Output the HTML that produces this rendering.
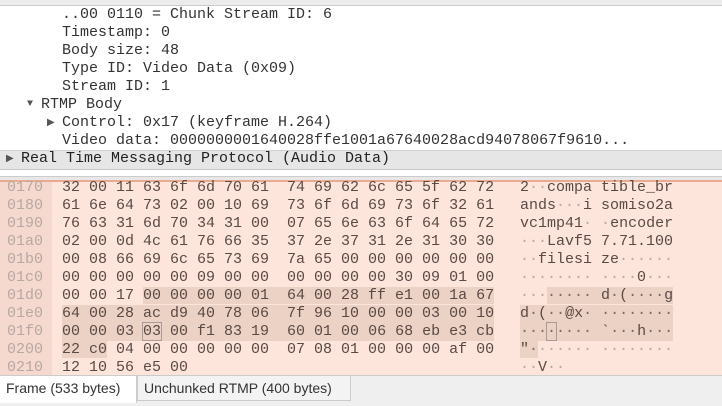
<!DOCTYPE html>
<html><head><meta charset="utf-8"><style>
body{margin:0;width:722px;height:405px;overflow:hidden;background:#fff;position:relative;font-family:"Liberation Mono",monospace;}
.r{position:absolute;left:0;height:18px;line-height:18px;font-size:15px;color:#333;white-space:pre;}
.tri{position:absolute;font-size:10px;color:#555;}
#hex{position:absolute;left:0;top:180px;width:722px;height:193px;background:#fde5dc;border-top:2px solid #e8aa90;border-bottom:2px solid #e0a890;}
#offcol{position:absolute;left:0;top:0;width:52px;height:100%;background:#f5d9cf;}
.h{position:absolute;height:18px;line-height:18px;font-size:15px;white-space:pre;color:#5a4a44;}
.o{color:#b8a8a2;left:7px;}
.x{left:62px;}
.a{left:520px;}
.hl{background:#ecd1c5;}
.d{color:#b5a8a4;}
.hl .d,.d.in{color:#7a6a64;}
.box{outline:1px solid #a99;}
#tabs{position:absolute;left:0;top:375px;width:722px;height:30px;background:#efefef;border-top:1px solid #ccc;font-family:"Liberation Sans",sans-serif;font-size:14px;color:#333;}
.tab{position:absolute;top:0;height:26px;line-height:24px;padding:0 6px;}
</style></head><body>
<div style="position:absolute;left:0;top:0;width:722px;height:5px;background:#ececec;border-bottom:1px solid #ccc"></div>
<div class="r" style="top:6px;left:62px">..00 0110 = Chunk Stream ID: 6</div>
<div class="r" style="top:24px;left:62px">Timestamp: 0</div>
<div class="r" style="top:42px;left:62px">Body size: 48</div>
<div class="r" style="top:60px;left:62px">Type ID: Video Data (0x09)</div>
<div class="r" style="top:78px;left:62px">Stream ID: 1</div>
<div class="tri" style="top:99px;left:27px">▼</div>
<div class="r" style="top:96px;left:41px">RTMP Body</div>
<div class="tri" style="top:117px;left:47px">▶</div>
<div class="r" style="top:114px;left:62px">Control: 0x17 (keyframe H.264)</div>
<div class="r" style="top:132px;left:62px">Video data: 0000000001640028ffe1001a67640028acd94078067f9610...</div>
<div style="position:absolute;left:0;top:150px;width:722px;height:18px;background:#e6e6e6;border-top:1px solid #d0d0d0;border-bottom:1px solid #c8c8c8"></div>
<div class="tri" style="top:153px;left:6px">▶</div>
<div class="r" style="top:150px;left:21px;color:#222">Real Time Messaging Protocol (Audio Data)</div>
<div style="position:absolute;left:0;top:176px;width:722px;height:4px;background:#e8e8e8;border-top:1px solid #ccc"></div>
<div id="hex"><div id="offcol"></div>
<div class="h o" style="top:-3px">0170</div><div class="h x" style="top:-3px">32 00 11 63 6f 6d 70 61  74 69 62 6c 65 5f 62 72</div><div class="h a" style="top:-3px">2<span class="d">··</span>compa tible_br</div>
<div class="h o" style="top:15px">0180</div><div class="h x" style="top:15px">61 6e 64 73 02 00 10 69  73 6f 6d 69 73 6f 32 61</div><div class="h a" style="top:15px">ands<span class="d">···</span>i somiso2a</div>
<div class="h o" style="top:33px">0190</div><div class="h x" style="top:33px">76 63 31 6d 70 34 31 00  07 65 6e 63 6f 64 65 72</div><div class="h a" style="top:33px">vc1mp41<span class="d">·</span> <span class="d">·</span>encoder</div>
<div class="h o" style="top:51px">01a0</div><div class="h x" style="top:51px">02 00 0d 4c 61 76 66 35  37 2e 37 31 2e 31 30 30</div><div class="h a" style="top:51px"><span class="d">···</span>Lavf5 7.71.100</div>
<div class="h o" style="top:69px">01b0</div><div class="h x" style="top:69px">00 08 66 69 6c 65 73 69  7a 65 00 00 00 00 00 00</div><div class="h a" style="top:69px"><span class="d">··</span>filesi ze<span class="d">······</span></div>
<div class="h o" style="top:87px">01c0</div><div class="h x" style="top:87px">00 00 00 00 00 09 00 00  00 00 00 00 30 09 01 00</div><div class="h a" style="top:87px"><span class="d">········ ····</span>0<span class="d">···</span></div>
<div class="h o" style="top:105px">01d0</div><div class="h x" style="top:105px">00 00 17 <span class="hl">00 00 00 00 01  64 00 28 ff e1 00 1a 67</span></div><div class="h a" style="top:105px"><span class="d">···</span><span class="hl"><span class="d">·····</span> d<span class="d">·</span>(<span class="d">····</span>g</span></div>
<div class="h o" style="top:123px">01e0</div><div class="h x hl" style="top:123px">64 00 28 ac d9 40 78 06  7f 96 10 00 00 03 00 10</div><div class="h a hl" style="top:123px">d<span class="d">·</span>(<span class="d">··</span>@x<span class="d">·</span> <span class="d">········</span></div>
<div class="h o" style="top:141px">01f0</div><div class="h x hl" style="top:141px">00 00 03 <span class="box">03</span> 00 f1 83 19  60 01 00 06 68 eb e3 cb</div><div class="h a hl" style="top:141px"><span class="d">···</span><span class="d box">·</span><span class="d">····</span> `<span class="d">···</span>h<span class="d">···</span></div>
<div class="h o" style="top:159px">0200</div><div class="h x" style="top:159px"><span class="hl">22 c0</span> 04 00 00 00 00 00  07 08 01 00 00 00 af 00</div><div class="h a" style="top:159px"><span class="hl">"<span class="d">·</span></span><span class="d">······ ········</span></div>
<div class="h o" style="top:177px">0210</div><div class="h x" style="top:177px">12 10 56 e5 00</div><div class="h a" style="top:177px"><span class="d">··</span>V<span class="d">··</span></div>
</div>
<div id="tabs">
<div class="tab" style="left:0;width:124px;background:#fff;height:27px;border-right:1px solid #ccc">Frame (533 bytes)</div>
<div class="tab" style="left:137px;width:200px;border:1px solid #ccc;border-top:none;background:#f3f3f3;height:24px">Unchunked RTMP (400 bytes)</div>
</div>
</body></html>
